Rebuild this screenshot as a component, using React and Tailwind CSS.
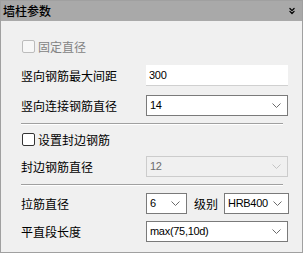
import { ChevronsDown } from 'lucide-react';

const cjk = { fontFamily: '"Noto Sans CJK SC", "Noto Sans", sans-serif' };
const num = { fontFamily: '"Liberation Sans", Arial, sans-serif' };

function Chevron({ disabled }) {
  return (
    <svg width="9" height="5" viewBox="0 0 9 5" className="shrink-0">
      <path d="M0.5 0.5 L4.5 4.5 L8.5 0.5" fill="none" stroke={disabled ? '#c4c4c4' : '#6b6b6b'} strokeWidth="1" />
    </svg>
  );
}

function Select({ value, width = 'w-[142px]', disabled = false }) {
  return (
    <div
      className={`flex h-[21px] ${width} shrink-0 items-center justify-between pl-[3px] pr-[6px] border ${
        disabled ? 'border-[#cccccc] bg-[#f0f0f0] text-[#6d6d6d]' : 'border-[#7a7a7a] bg-white text-black'
      }`}
    >
      <span className="text-[11px] leading-none tracking-[-0.3px]" style={num}>{value}</span>
      <Chevron disabled={disabled} />
    </div>
  );
}

function Checkbox({ label, disabled = false }) {
  return (
    <div className="flex h-[17px] items-center gap-[3px]">
      <div
        className={`h-[13px] w-[13px] rounded-[2px] border ${
          disabled ? 'border-[#bcbcbc] bg-[#f7f7f7]' : 'border-[#333333] bg-white'
        }`}
      />
      <span className={`text-[12px] leading-none ${disabled ? 'text-[#838383]' : 'text-black'}`} style={cjk}>
        {label}
      </span>
    </div>
  );
}

function Row({ label, children }) {
  return (
    <div className="flex h-[21px] items-center">
      <span className="w-[125px] shrink-0 text-[12px] leading-none text-black" style={cjk}>{label}</span>
      {children}
    </div>
  );
}

export default function App() {
  return (
    <div className="h-[253px] w-[304px] bg-white">
      <div className="flex h-[253px] w-[303px] flex-col border border-[#a0a0a0] bg-[#f0f0f0]">
        <div className="flex h-[20px] items-center justify-between bg-[#a9a9a9] pl-[2px] pr-[5px]">
          <span className="text-[12px] font-medium leading-none text-black" style={cjk}>墙柱参数</span>
          <ChevronsDown size={10} strokeWidth={3} className="text-black" />
        </div>
        <div className="flex flex-col pl-[20px] pr-[14px]">
          <div className="mt-[17px] pl-[1px]">
            <Checkbox label="固定直径" disabled />
          </div>
          <div className="mt-[10px]">
            <Row label="竖向钢筋最大间距">
              <div className="flex h-[21px] w-[142px] items-center border-b border-[#d0d0d0] bg-white pl-[3px]">
                <span className="text-[11px] leading-none tracking-[-0.3px] text-black" style={num}>300</span>
              </div>
            </Row>
          </div>
          <div className="mt-[9px]">
            <Row label="竖向连接钢筋直径">
              <Select value="14" />
            </Row>
          </div>
          <div className="mt-[7px] mr-[5px] h-[2px] border-t border-[#a0a0a0] border-b border-b-white" />
          <div className="mt-[6px] pl-[1px]">
            <Checkbox label="设置封边钢筋" />
          </div>
          <div className="mt-[8px]">
            <Row label="封边钢筋直径">
              <Select value="12" disabled />
            </Row>
          </div>
          <div className="mt-[7px] mr-[5px] h-[2px] border-t border-[#a0a0a0] border-b border-b-white" />
          <div className="mt-[7px]">
            <Row label="拉筋直径">
              <Select value="6" width="w-[41px]" />
              <span className="ml-[7px] w-[30px] shrink-0 text-[12px] leading-none text-black" style={cjk}>级别</span>
              <Select value="HRB400" width="w-[65px]" />
            </Row>
          </div>
          <div className="mt-[7px]">
            <Row label="平直段长度">
              <Select value="max(75,10d)" />
            </Row>
          </div>
        </div>
      </div>
    </div>
  );
}
